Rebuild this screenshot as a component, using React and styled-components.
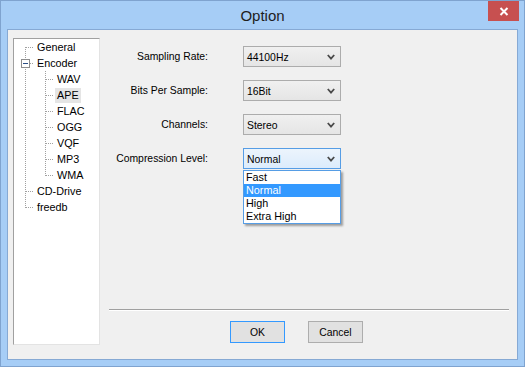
import React from "react";
import styled, { createGlobalStyle } from "styled-components";

const GlobalStyle = createGlobalStyle`
  html, body {
    margin: 0;
    padding: 0;
  }
  body {
    width: 525px;
    height: 367px;
    overflow: hidden;
    font-family: "Liberation Sans", Arial, sans-serif;
    font-size: 10.4px;
    color: #000;
  }
`;

const Window = styled.div`
  width: 525px;
  height: 367px;
  box-sizing: border-box;
  background: #a6cdf6;
  border: 1px solid #7fa3cf;
  padding: 0 6px 6px 6px;
  display: flex;
  flex-direction: column;
`;

const TitleBar = styled.div`
  height: 28px;
  display: grid;
  grid-template-columns: 1fr auto 1fr;
  align-items: center;
`;

const Title = styled.div`
  grid-column: 2;
  font-size: 15px;
  color: #1e1e1e;
  padding-top: 1px;
`;

const CloseButton = styled.div`
  grid-column: 3;
  justify-self: end;
  align-self: start;
  width: 31px;
  height: 20px;
  margin-right: -1px;
  background: #c75050;
  display: flex;
  align-items: center;
  justify-content: center;
`;

const Client = styled.div`
  flex: 1;
  background: #f0f0f0;
  border: 1px solid #86a9d4;
  display: flex;
  padding: 8px 8px 14px 5px;
  min-height: 0;
`;

const Tree = styled.div`
  width: 87px;
  box-sizing: border-box;
  background: #fff;
  border-top: 1px solid #a0a0a0;
  border-left: 1px solid #a0a0a0;
  border-right: 1px solid #e3e3e3;
  border-bottom: 1px solid #e3e3e3;
  display: flex;
  flex-direction: column;
`;

const TreeRow = styled.div`
  height: 16px;
  display: flex;
  align-items: center;
`;

const TreeLabel = styled.span`
  margin-left: 1px;
  padding: 0 2px;
  height: 15px;
  line-height: 15px;
  font-size: 10.8px;
  background: ${(p) => (p.$hover ? "#e5e5e5" : "transparent")};
  white-space: nowrap;
`;

const GuideSvg = styled.svg`
  display: block;
  flex: none;
`;

const dot = { stroke: "#a0a0a0", strokeWidth: 1, strokeDasharray: "1 1" };

function Guide({ kind, minus }) {
  return (
    <GuideSvg width="20" height="16" viewBox="0 0 20 16">
      {kind === "first" && <line x1="11.5" y1="8" x2="11.5" y2="16" style={dot} />}
      {(kind === "tee" || kind === "pipe") && (
        <line x1="11.5" y1="0" x2="11.5" y2="16" style={dot} />
      )}
      {kind === "last" && <line x1="11.5" y1="0" x2="11.5" y2="9" style={dot} />}
      {kind !== "pipe" && kind !== "blank" && (
        <line x1={minus ? 16 : 12} y1="8.5" x2="20" y2="8.5" style={dot} />
      )}
      {minus && (
        <>
          <rect x="7.5" y="4.5" width="8" height="8" fill="#fff" stroke="#8d8d8d" />
          <line x1="9" y1="8.5" x2="14" y2="8.5" stroke="#2b4f86" />
        </>
      )}
    </GuideSvg>
  );
}

const treeItems = [
  { label: "General", guides: ["first"] },
  { label: "Encoder", guides: ["tee"], minus: true },
  { label: "WAV", guides: ["pipe", "tee"] },
  { label: "APE", guides: ["pipe", "tee"], hover: true },
  { label: "FLAC", guides: ["pipe", "tee"] },
  { label: "OGG", guides: ["pipe", "tee"] },
  { label: "VQF", guides: ["pipe", "tee"] },
  { label: "MP3", guides: ["pipe", "tee"] },
  { label: "WMA", guides: ["pipe", "last"] },
  { label: "CD-Drive", guides: ["tee"] },
  { label: "freedb", guides: ["last"] },
];

const Panel = styled.div`
  flex: 1;
  margin-left: 9px;
  display: flex;
  flex-direction: column;
`;

const Form = styled.div`
  margin-top: 8px;
  display: grid;
  grid-template-columns: 99px 98px;
  column-gap: 35px;
  row-gap: 13px;
  align-items: center;
`;

const Label = styled.div`
  text-align: right;
  white-space: nowrap;
`;

const ComboWrap = styled.div`
  position: relative;
`;

const Combo = styled.div`
  height: 21px;
  box-sizing: border-box;
  border: 1px solid ${(p) => (p.$focused ? "#569de5" : "#acacac")};
  background: ${(p) =>
    p.$focused
      ? "linear-gradient(#ecf4fc, #dcecfc)"
      : "linear-gradient(#f0f0f0, #e5e5e5)"};
  display: flex;
  align-items: center;
  justify-content: space-between;
  padding: 0 5px 0 3px;
`;

const ComboText = styled.span`
  padding-top: 1px;
`;

function Chevron() {
  return (
    <svg width="8" height="6" viewBox="0 0 8 6">
      <polyline
        points="0.8,1 4,4.6 7.2,1"
        fill="none"
        stroke="#4a4a4a"
        strokeWidth="1.8"
      />
    </svg>
  );
}

const DropList = styled.div`
  position: absolute;
  top: 100%;
  left: 0;
  width: 98px;
  box-sizing: border-box;
  margin-top: 1px;
  background: #fff;
  border: 1px solid #569de5;
  box-shadow: 2px 2px 2px rgba(0, 0, 0, 0.35);
  z-index: 2;
`;

const DropItem = styled.div`
  height: 13px;
  line-height: 13px;
  padding-left: 2px;
  font-size: 10.8px;
  background: ${(p) => (p.$selected ? "#3399ff" : "transparent")};
  color: ${(p) => (p.$selected ? "#fff" : "#000")};
`;

const Spacer = styled.div`
  flex: 1;
`;

const Separator = styled.div`
  height: 1px;
  background: #a0a0a0;
  border-bottom: 1px solid #fff;
`;

const ButtonRow = styled.div`
  display: flex;
  gap: 23px;
  padding-left: 121px;
  margin-top: 10px;
  margin-bottom: 2px;
`;

const Button = styled.div`
  width: 55px;
  height: 22px;
  box-sizing: border-box;
  border: 1px solid ${(p) => (p.$default ? "#3399ff" : "#adadad")};
  background: #e1e1e1;
  display: flex;
  align-items: center;
  justify-content: center;
`;

const fields = [
  { label: "Sampling Rate:", value: "44100Hz" },
  { label: "Bits Per Sample:", value: "16Bit" },
  { label: "Channels:", value: "Stereo" },
  { label: "Compression Level:", value: "Normal", open: true },
];

const levels = ["Fast", "Normal", "High", "Extra High"];

export default function App() {
  return (
    <>
      <GlobalStyle />
      <Window>
        <TitleBar>
          <Title>Option</Title>
          <CloseButton>
            <svg width="10" height="9" viewBox="0 0 10 9">
              <path d="M1.5 1 L8.5 8 M8.5 1 L1.5 8" stroke="#fff" strokeWidth="2" />
            </svg>
          </CloseButton>
        </TitleBar>
        <Client>
          <Tree>
            {treeItems.map((item) => (
              <TreeRow key={item.label}>
                {item.guides.map((g, i) => (
                  <Guide key={i} kind={g} minus={item.minus} />
                ))}
                <TreeLabel $hover={item.hover}>{item.label}</TreeLabel>
              </TreeRow>
            ))}
          </Tree>
          <Panel>
            <Form>
              {fields.map((f) => (
                <React.Fragment key={f.label}>
                  <Label>{f.label}</Label>
                  <ComboWrap>
                    <Combo $focused={f.open}>
                      <ComboText>{f.value}</ComboText>
                      <Chevron />
                    </Combo>
                    {f.open && (
                      <DropList>
                        {levels.map((l) => (
                          <DropItem key={l} $selected={l === f.value}>
                            {l}
                          </DropItem>
                        ))}
                      </DropList>
                    )}
                  </ComboWrap>
                </React.Fragment>
              ))}
            </Form>
            <Spacer />
            <Separator />
            <ButtonRow>
              <Button $default>OK</Button>
              <Button>Cancel</Button>
            </ButtonRow>
          </Panel>
        </Client>
      </Window>
    </>
  );
}
